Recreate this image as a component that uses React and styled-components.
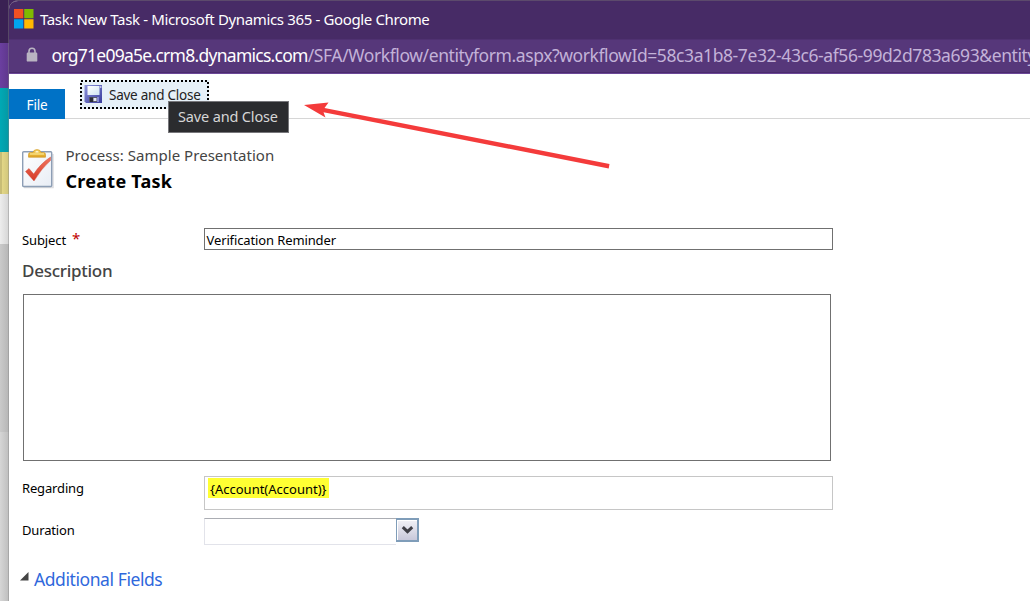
import React from "react";
import styled, { createGlobalStyle } from "styled-components";

const GlobalStyle = createGlobalStyle`
  * { box-sizing: border-box; }
  html, body { margin: 0; padding: 0; overflow: hidden; }
  body { font-family: "Noto Sans", "Open Sans", sans-serif; background: #fff; }
`;

const Desktop = styled.div`
  display: flex;
  position: relative;
  width: 1030px;
  height: 601px;
  overflow: hidden;
  background: linear-gradient(#43265f 0 43px, #fff 43px);
`;

const Backdrop = styled.div`
  display: flex;
  flex-direction: column;
  flex: none;
  width: 9px;
`;

const Band = styled.div`
  flex: none;
  height: ${(p) => p.$h}px;
  background: ${(p) => p.$bg};
  box-shadow: inset -1px 0 #85858566;
`;

const Popup = styled.div`
  flex: 1;
  min-width: 0;
  display: flex;
  flex-direction: column;
  background: #fff;
  border-top: 1px solid #5c4a6c;
  border-radius: 9px 0 0 0;
  overflow: hidden;
`;

const TitleBar = styled.header`
  display: flex;
  align-items: center;
  gap: 6px;
  height: 38px;
  flex: none;
  padding: 0 0 2px 5px;
  background: #472b66;
  color: #fff;
`;

const AddressBar = styled.div`
  display: flex;
  align-items: center;
  height: 35px;
  flex: none;
  padding: 0 0 2px 17px;
  background: #56377a;
  border-bottom: 1px solid #6b4798;
  box-shadow: inset 0 1px #4f3171, inset 0 -1px #4b2c6d;
  overflow: hidden;

  svg { flex: none; }
`;

const Label = styled.span`
  display: block;
  white-space: pre;
  line-height: 20px;
  font-size: ${(p) => p.$size}px;
  letter-spacing: ${(p) => p.$track || 0}px;
  font-weight: ${(p) => p.$weight || 400};
  color: ${(p) => p.$color || "#000"};
`;

const Host = styled(Label)`
  flex: none;
  margin-left: 13.5px;
  line-height: 24px;
`;
const Path = styled(Label)`
  line-height: 24px;
`;

const Ribbon = styled.div`
  display: flex;
  align-items: flex-start;
  height: 45px;
  flex: none;
  border-bottom: 1px solid #d6d6d6;
`;

const FileTab = styled.div`
  display: flex;
  align-items: center;
  justify-content: center;
  width: 56px;
  height: 30px;
  margin-top: 15px;
  padding-top: 2px;
  background: #0072c6;
`;

const RibbonButton = styled.div`
  position: relative;
  display: flex;
  align-items: flex-start;
  gap: 6px;
  width: 129px;
  height: 29px;
  margin: 6px 0 0 15px;
  padding: 5px 0 0 4px;
  background: #e6f0f8;
`;

const FocusRing = styled.svg`
  position: absolute;
  inset: 0;
`;

const Tooltip = styled.div`
  position: absolute;
  left: 88px;
  top: 21px;
  z-index: 2;
  display: flex;
  align-items: center;
  width: 121px;
  height: 32px;
  padding: 0 0 2px 9px;
  background: #2b2c2f;
  border: 1px solid #77777b;
`;

const Heading = styled.div`
  display: flex;
  gap: 11.5px;
  height: 109px;
  padding: 26px 0 0 12px;

  > svg { margin-top: 4px; }
`;

const HeadingText = styled.div`
  display: flex;
  flex-direction: column;
  gap: 6px;
`;

const Row = styled.div`
  display: flex;
  height: ${(p) => p.$h}px;
  padding-left: 13px;
`;

const FieldName = styled.div`
  display: flex;
  gap: 6px;
  width: 182px;
  flex: none;
  padding-top: ${(p) => p.$top || 0}px;
`;

const Required = styled(Label)`
  margin-top: -2px;
`;

const TextInput = styled.div`
  width: 629px;
  height: ${(p) => p.$h}px;
  border: 1px solid ${(p) => p.$border};
  padding: ${(p) => p.$pad};
`;

const Mark = styled.span`
  display: flex;
  width: 121px;
  height: 20px;
  padding: 0.5px 0 0 2px;
  background: #ffff33;
`;

const SectionTitle = styled.div`
  height: 44px;
  padding: 11px 0 0 13px;
`;

const TextArea = styled.div`
  width: 808px;
  height: 167px;
  flex: none;
  margin: 0 0 15px 14px;
  border: 1px solid #707070;
`;

const ComboBox = styled.div`
  display: flex;
  align-items: flex-start;
`;

const ComboInput = styled.div`
  width: 192px;
  height: 27px;
  border: 1px solid #e2e3ea;
  border-top-color: #abadb3;
  border-right: 0;
`;

const ComboButton = styled.div`
  display: flex;
  align-items: center;
  justify-content: center;
  width: 23px;
  height: 24px;
  border: 2px solid #7f9db9;
  border-left-width: 1px;
  background: linear-gradient(#f1f1f6, #c8c8da);
  box-shadow: inset 1px 1px #fff;
`;

const Expander = styled.div`
  display: flex;
  align-items: flex-start;
  gap: 5px;
  padding: 11px 0 0 11px;
`;

const Annotation = styled.svg`
  position: absolute;
  left: 300px;
  top: 95px;
`;

const WindowsLogo = () => (
  <svg width="20" height="20" viewBox="0 0 20 20">
    <path fill="#f25022" d="M0 0h9.3v9.3H0z" />
    <path fill="#7fba00" d="M10.2 0h9.3v9.3h-9.3z" />
    <path fill="#00a4ef" d="M0 10.2h9.3v9.3H0z" />
    <path fill="#ffb900" d="M10.2 10.2h9.3v9.3h-9.3z" />
  </svg>
);

const LockIcon = () => (
  <svg width="12" height="16" viewBox="0 0 12 16">
    <path d="M3 6V4.300a3 3 0 0 1 6 0v2" fill="none" stroke="#b9b4c2" strokeWidth="1.6" />
    <rect x=".7" y="5.600" width="10.600" height="9" rx="1.200" fill="#b9b4c2" />
  </svg>
);

const DiskIcon = () => (
  <svg width="19" height="19" viewBox="0 0 19 19">
    <defs>
      <linearGradient id="disk" x1="0" x2="1" y1="0" y2="1">
        <stop offset="0" stopColor="#8d95dd" />
        <stop offset="1" stopColor="#393b9c" />
      </linearGradient>
      <linearGradient id="paper" x1="0" x2="1" y1="0" y2="1">
        <stop offset="0" stopColor="#fff" />
        <stop offset="1" stopColor="#cfe3f2" />
      </linearGradient>
    </defs>
    <path d="M.5 0h17.500v18H2L.500 16.500z" fill="url(#disk)" />
    <path d="M3.500 1h12v9h-12z" fill="url(#paper)" />
    <path d="M16.300 1h1v2h-1z" fill="#e8eaff" />
    <path d="M5 12h8v5H5z" fill="#55586a" />
    <path d="M9.500 13h3v3h-3z" fill="#e4e7f2" />
    <path d="M6 12.500h3V17H6z" fill="#2a2b35" />
    <path d="M13 12h2v5h-2z" fill="#8489cf" />
  </svg>
);

const ClipboardIcon = () => (
  <svg width="33" height="40" viewBox="0 0 33 40">
    <defs>
      <linearGradient id="sheet" x1="0" x2="1" y1="0" y2="1">
        <stop offset="0" stopColor="#fff" />
        <stop offset="1" stopColor="#e8edf5" />
      </linearGradient>
      <linearGradient id="clip" x1="0" x2="0" y1="0" y2="1">
        <stop offset="0" stopColor="#f6d566" />
        <stop offset="1" stopColor="#dfa321" />
      </linearGradient>
      <linearGradient id="tick" x1="0" x2="0" y1="0" y2="1">
        <stop offset="0" stopColor="#f0755f" />
        <stop offset="1" stopColor="#d63a28" />
      </linearGradient>
    </defs>
    <path d="M3 38.500h29V5" fill="none" stroke="#dcdcdf" strokeWidth="1.500" />
    <rect x="1.700" y="2.700" width="29" height="34.800" rx="1" fill="url(#sheet)" stroke="#8d9eb5" strokeWidth="1.400" />
    <path d="M7.500 5.500q0-2 2-2H12Q12.500.600 16 .600t4 2.900h2.500q2 0 2 2v2.700h-17z" fill="url(#clip)" stroke="#d19b2a" strokeWidth=".7" />
    <path d="M14.300 3.400q0-1.300 1.700-1.300t1.700 1.300z" fill="#fff7d8" />
    <path d="M9 5h14" stroke="#fff0a0" strokeWidth="1" />
    <path d="M4.500 22.500l3.500-3 4.700 5.500Q19 15 29.500 8v3.500Q20.500 19.500 13 32z" fill="url(#tick)" stroke="#c94231" strokeWidth=".4" />
  </svg>
);

export default function App() {
  return (
    <Desktop>
      <GlobalStyle />
      <Backdrop>
        <Band $h={43} $bg="#3a2153" />
        <Band $h={45} $bg="linear-gradient(90deg, #6b3fa0, #5e378c)" />
        <Band $h={64} $bg="linear-gradient(90deg, #00a9b5, #0598a3)" />
        <Band $h={42} $bg="linear-gradient(90deg, #c8bd76 0 2px, #e3d787 2px, #d0c57b)" />
        <Band $h={50} $bg="linear-gradient(90deg, #ededed, #d4d4d4)" />
        <Band $h={188} $bg="linear-gradient(90deg, #cacaca, #b5b5b5)" />
        <Band $h={169} $bg="linear-gradient(90deg, #d6d6d6, #bdbdbd)" />
      </Backdrop>
      <Popup>
        <TitleBar>
          <WindowsLogo />
          <Label $size={15} $track={-0.36} $color="#fff">Task: New Task - Microsoft Dynamics 365 - Google Chrome</Label>
        </TitleBar>
        <AddressBar>
          <LockIcon />
          <Host $size={17.5} $track={-0.73} $color="#fff">org71e09a5e.crm8.dynamics.com</Host>
          <Path $size={17.5} $track={-0.41} $color="#c3b2d8">/SFA/Workflow/entityform.aspx?workflowId=58c3a1b8-7e32-43c6-af56-99d2d783a693&amp;entity</Path>
        </AddressBar>
        <Ribbon>
          <FileTab>
            <Label $size={13.5} $track={-0.2} $color="#fff">File</Label>
          </FileTab>
          <RibbonButton>
            <DiskIcon />
            <Label $size={13.5} $track={-0.24} $color="#222">Save and Close</Label>
            <FocusRing width="129" height="29">
              <rect x="1" y="1" width="127" height="27" fill="none" stroke="#000" strokeWidth="2" strokeDasharray="2 2" />
            </FocusRing>
            <Tooltip>
              <Label $size={14.5} $track={-0.15} $color="#d6d6d6">Save and Close</Label>
            </Tooltip>
          </RibbonButton>
        </Ribbon>
        <Heading>
          <ClipboardIcon />
          <HeadingText>
            <Label $size={15} $track={0.03} $color="#444">Process: Sample Presentation</Label>
            <Label $size={18} $track={0.26} $weight={700}>Create Task</Label>
          </HeadingText>
        </Heading>
        <Row $h={22}>
          <FieldName $top={2}>
            <Label $size={13} $track={-0.1}>Subject</Label>
            <Required $size={15} $color="#c00000">*</Required>
          </FieldName>
          <TextInput $h={22} $border="#707070" $pad="1px 0 0 1.5px">
            <Label $size={13} $track={-0.12}>Verification Reminder</Label>
          </TextInput>
        </Row>
        <SectionTitle>
          <Label $size={17} $track={-0.27} $weight={500} $color="#444">Description</Label>
        </SectionTitle>
        <TextArea />
        <Row $h={42}>
          <FieldName $top={2}>
            <Label $size={13} $track={-0.15}>Regarding</Label>
          </FieldName>
          <TextInput $h={34} $border="#c6c6c6" $pad="1px 0 0 3px">
            <Mark>
              <Label $size={13} $track={0}>{"{Account(Account)}"}</Label>
            </Mark>
          </TextInput>
        </Row>
        <Row $h={40}>
          <FieldName $top={2}>
            <Label $size={13} $track={-0.15}>Duration</Label>
          </FieldName>
          <ComboBox>
            <ComboInput />
            <ComboButton>
              <svg width="13" height="10" viewBox="0 0 13 10">
                <path d="M1.800 2.200l4.700 4.500 4.700-4.500" fill="none" stroke="#3f3f46" strokeWidth="3" />
              </svg>
            </ComboButton>
          </ComboBox>
        </Row>
        <Expander>
          <svg width="9" height="13" viewBox="0 0 9 13">
            <path d="M8.500 3v8.500H0z" fill="#444" />
          </svg>
          <Label $size={17.5} $track={-0.42} $color="#2f68dc">Additional Fields</Label>
        </Expander>
      </Popup>
      <Annotation width="315" height="80">
        <path d="M4 10L28.500 7.500 24.500 13 309.500 69 308.700 73.500 23.500 17.200 25.500 22.500z" fill="#f43b3b" />
      </Annotation>
    </Desktop>
  );
}
